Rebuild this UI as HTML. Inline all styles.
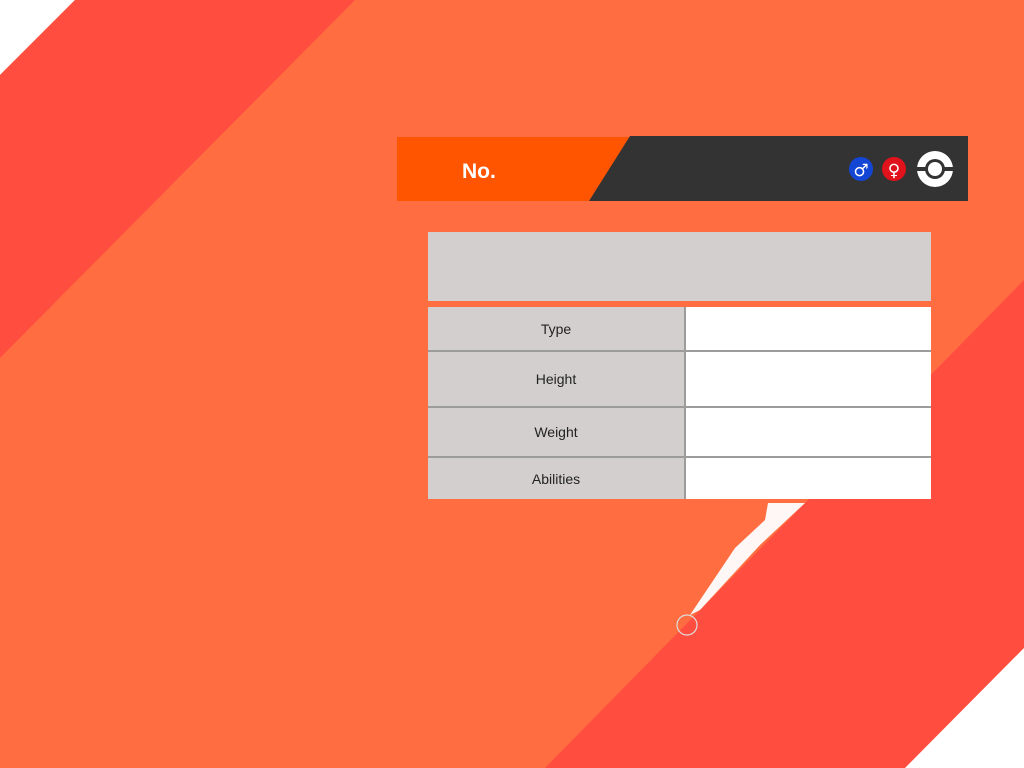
<!DOCTYPE html>
<html><head><style>
body{margin:0;width:1024px;height:768px;overflow:hidden;font-family:"Liberation Sans",sans-serif;position:relative;background:#FF6D40}
svg.bg{position:absolute;left:0;top:0}
.row{position:absolute;left:428px;width:503px;display:flex}
.row .l{width:256px;background:#D3CFCF;display:flex;align-items:center;justify-content:center;font-size:14px;color:#222}
.row .v{flex:1;background:#fff;margin-left:2px}
</style></head><body>
<svg class="bg" width="1024" height="768">
<rect width="1024" height="768" fill="#FF6D40"/>
<polygon points="0,0 75,0 0,75" fill="#fff"/>
<polygon points="75,0 355,0 0,358 0,75" fill="#FF4E40"/>
<polygon points="1024,280 1024,648 905,768 545,768" fill="#FF4E40"/>
<polygon points="1024,648 1024,768 905,768" fill="#fff"/>
<path d="M768,503 L805,503 L760,545 L700,610 L690,615 L735,548 L765,520 Z" fill="#fff" opacity="0.95"/>
<circle cx="687" cy="625" r="10" fill="none" stroke="#ddd" stroke-width="1.2"/>
<polygon points="397,137 630,137 589,201 397,201" fill="#FF5500"/>
<polygon points="630,136 968,136 968,201 589,201" fill="#333"/>
<text x="462" y="178" font-family="Liberation Sans" font-weight="bold" font-size="21" fill="#fff">No.</text>
<circle cx="861" cy="169" r="12" fill="#1446D6"/>
<text x="861" y="176" text-anchor="middle" font-size="17" fill="#fff" font-family="DejaVu Sans">♂</text>
<circle cx="894" cy="169" r="12" fill="#E0121B"/>
<text x="894" y="176" text-anchor="middle" font-size="17" fill="#fff" font-family="DejaVu Sans">♀</text>
<circle cx="935" cy="169" r="18" fill="#fff"/>
<rect x="917" y="167" width="36" height="4" fill="#333"/>
<circle cx="935" cy="169" r="10" fill="#333"/>
<circle cx="935" cy="169" r="7" fill="#fff"/>
</svg>
<div style="position:absolute;left:428px;top:232px;width:503px;height:69px;background:#D3CFCF"></div>
<div style="position:absolute;left:428px;top:307px;width:503px;height:192px;background:#9c9c9c"></div>
<div class="row" style="top:307px;height:43px"><div class="l">Type</div><div class="v"></div></div>
<div class="row" style="top:352px;height:54px"><div class="l">Height</div><div class="v"></div></div>
<div class="row" style="top:408px;height:48px"><div class="l">Weight</div><div class="v"></div></div>
<div class="row" style="top:458px;height:41px"><div class="l">Abilities</div><div class="v"></div></div>
</body></html>
